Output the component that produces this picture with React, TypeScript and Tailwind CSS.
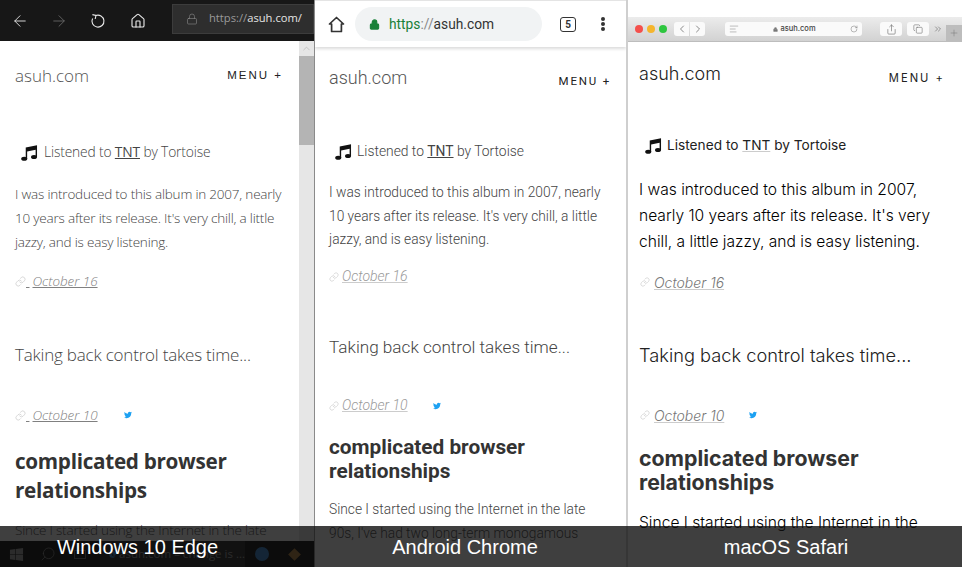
import React from 'react';
import { ArrowLeft, ArrowRight, Home, Lock, Link, Search, Plus, ChevronLeft, ChevronRight, ChevronUp, Share, Copy, ChevronsRight, RotateCw, AlignLeft } from 'lucide-react';
import { FaTwitter, FaWindows, FaEdge } from 'react-icons/fa';

const MusicNote = ({ className }: { className: string }) => (
  <svg viewBox="0 0 18 17" className={className} fill="currentColor">
    <path d="M5 2.6 17 0.2V13h-1.5V5L6.5 6.8V15H5Z" />
    <ellipse cx="3.4" cy="14.6" rx="3.2" ry="2.2" />
    <ellipse cx="13.8" cy="12.8" rx="3.2" ry="2.2" />
  </svg>
);

const EdgeRefresh = () => (
  <svg viewBox="0 0 16 16" className="w-[16px] h-[16px] mr-[24px]" fill="none" stroke="currentColor" strokeWidth="1.1">
    <path d="M5.6 2.6A6 6 0 1 1 2.6 5.4" />
    <path d="M2.4 1.6 6 2.4 5.2 6" />
  </svg>
);

const ChromeHome = () => (
  <svg viewBox="0 0 17 17" className="w-[17px] h-[17px] mr-[10px] text-[#333]" fill="none" stroke="currentColor" strokeWidth="1.7" strokeLinejoin="round">
    <path d="M8.5 1.5 15.5 8H13.4V15.5H3.6V8H1.5Z" />
  </svg>
);

const EdgeColumn = () => (
  <div className="flex flex-col w-[315px] h-[567px] shrink-0 border-r border-[#8a8a8a] overflow-hidden bg-white font-['Open_Sans',sans-serif] font-light text-[#444]">
    <div className="flex items-center h-[41px] shrink-0 bg-[#171717] pl-[11px] text-[#e8e8e8]">
      <ArrowLeft className="w-[18px] h-[18px] mr-[21px]" strokeWidth={1.2} />
      <ArrowRight className="w-[18px] h-[18px] mr-[22px] text-[#666]" strokeWidth={1.2} />
      <EdgeRefresh />
      <Home className="w-[16px] h-[16px] mr-[26px]" strokeWidth={1.7} />
      <div className="flex items-center flex-1 h-[30px] mb-[4px] bg-[#2e2e2e] border border-[#3c3c3c] pl-[13px] text-[11.2px] font-normal whitespace-nowrap">
        <Lock className="w-[12px] h-[12px] mr-[11px] text-[#8b8b8b]" strokeWidth={1.2} />
        <span className="text-[#9a9a9a]">https://</span>
        <span className="text-[#e4e4e4]">asuh.com/</span>
      </div>
    </div>
    <div className="flex flex-1 min-h-0">
      <div className="flex-1 min-w-0 pl-[15px] pr-[16px] overflow-hidden">
        <div className="flex items-center justify-between h-[70px]">
          <span className="text-[17px] text-[#555]">asuh.com</span>
          <span className="font-['Liberation_Sans',sans-serif] font-normal text-[11.5px] tracking-[2px] text-[#222] whitespace-nowrap">MENU +</span>
        </div>
        <div className="flex items-center h-[24px] mt-[29px] pl-[6px] text-[13.8px] tracking-[-0.15px] whitespace-nowrap">
          <MusicNote className="w-[17px] h-[16px] mr-[6px] mt-[2px] text-[#111]" />
          <span>Listened to <span className="underline font-normal">TNT</span> by Tortoise</span>
        </div>
        <p className="mt-[18px] text-[13.5px] tracking-[-0.2px] leading-[24px] w-[275px]">I was introduced to this album in 2007, nearly 10 years after its release. It's very chill, a little jazzy, and is easy listening.</p>
        <div className="flex items-center h-[24px] mt-[15px] text-[13.4px] italic text-[#808080]">
          <Link className="w-[11px] h-[11px] text-[#bbb]" strokeWidth={1.2} />
          <span className="underline whitespace-pre"> </span>
          <span className="underline ml-[3px]">October 16</span>
        </div>
        <div className="h-[28px] mt-[48px] text-[17px] tracking-[-0.2px] leading-[28px] whitespace-nowrap">Taking back control takes time...</div>
        <div className="flex items-center h-[24px] mt-[34px] text-[13.4px] italic text-[#808080]">
          <Link className="w-[11px] h-[11px] text-[#bbb]" strokeWidth={1.2} />
          <span className="underline whitespace-pre"> </span>
          <span className="underline ml-[3px]">October 10</span>
          <FaTwitter className="w-[8px] h-[8px] ml-[26px] text-[#1da1f2]" />
        </div>
        <h2 className="mt-[20px] text-[20.7px] tracking-[-0.3px] leading-[29px] font-bold text-[#333]">complicated browser relationships</h2>
        <p className="mt-[13px] text-[13.5px] tracking-[-0.2px] leading-[24px] whitespace-nowrap">Since I started using the Internet in the late</p>
      </div>
      <div className="flex flex-col w-[15px] shrink-0 bg-[#e6e6e6]">
        <div className="flex items-center justify-center h-[15px] text-[#999]">
          <ChevronUp className="w-[11px] h-[11px]" strokeWidth={1} />
        </div>
        <div className="h-[89px] bg-[#b4b4b4]" />
      </div>
    </div>
    <div className="flex items-center h-[26px] shrink-0 bg-black text-[#999]">
      <FaWindows className="w-[15px] h-[15px] ml-[9px]" />
      <Search className="w-[16px] h-[16px] ml-[16px] -scale-x-100" strokeWidth={1} />
      <div className="w-[12px] h-[9px] ml-[18px] border border-[#666]" />
      <div className="flex items-center w-[145px] h-full ml-[14px] bg-[#1c1c1c] pl-[9px] text-[11.5px] font-normal text-[#999] whitespace-nowrap">
        <FaEdge className="w-[11px] h-[11px] mr-[3px] text-[#2a7fd0]" />
        asuh.com – change is ...
      </div>
      <div className="w-[14px] h-[14px] ml-[10px] rounded-full bg-[#2a7fd0]" />
      <div className="w-[9px] h-[9px] ml-[21px] rotate-45 bg-[#b07a30]" />
    </div>
  </div>
);

const ChromeColumn = () => (
  <div className="flex flex-col w-[312px] h-[567px] shrink-0 border-r border-[#cfcfcf] overflow-hidden bg-white font-['Roboto',sans-serif] font-light text-[#444]">
    <div className="flex items-center h-[47px] shrink-0 border-t border-[#e4e4e4] shadow-[0_2px_3px_rgba(0,0,0,0.14)] pl-[13px] relative">
      <ChromeHome />
      <div className="flex items-center w-[187px] h-[34px] rounded-full bg-[#f1f3f4] pl-[14px] text-[13.75px] font-normal whitespace-nowrap">
        <Lock className="w-[11px] h-[11px] mr-[9px] text-[#188038]" fill="currentColor" strokeWidth={2.4} />
        <span className="text-[#188038]">https</span>
        <span className="text-[#888]">://</span>
        <span className="text-[#333]">asuh.com</span>
      </div>
      <div className="flex items-center justify-center w-[16px] h-[15px] ml-[18px] border-[1.5px] border-[#333] rounded-[3px] text-[10px] font-bold text-[#333]">5</div>
      <div className="flex flex-col gap-[1px] ml-[25px]">
        <span className="w-[4px] h-[4px] rounded-full bg-[#333]" />
        <span className="w-[4px] h-[4px] rounded-full bg-[#333]" />
        <span className="w-[4px] h-[4px] rounded-full bg-[#333]" />
      </div>
    </div>
    <div className="flex-1 min-h-0 pl-[14px] pr-[15px] overflow-hidden">
      <div className="flex justify-between h-[62px]">
        <span className="text-[18px] leading-[62px] text-[#555]">asuh.com</span>
        <span className="mt-[24px] text-[11.5px] font-normal leading-[20px] tracking-[1.8px] text-[#222] whitespace-nowrap">MENU +</span>
      </div>
      <div className="flex items-center h-[24px] mt-[30px] pl-[6px] text-[13.85px] whitespace-nowrap">
        <MusicNote className="w-[17px] h-[16px] mr-[5px] mt-[2px] text-[#111]" />
        <span>Listened to <span className="underline font-normal">TNT</span> by Tortoise</span>
      </div>
      <p className="mt-[18px] text-[13.75px] leading-[23.5px]">I was introduced to this album in 2007, nearly 10 years after its release. It's very chill, a little jazzy, and is easy listening.</p>
      <div className="flex items-center h-[24px] mt-[13px] text-[14px] italic text-[#999]">
        <Link className="w-[10px] h-[10px] mr-[3px] text-[#bbb]" strokeWidth={1.2} />
        <span className="underline decoration-[#ccc]">October 16</span>
      </div>
      <div className="h-[28px] mt-[44px] text-[17.15px] leading-[28px] whitespace-nowrap">Taking back control takes time...</div>
      <div className="flex items-center h-[24px] mt-[33px] text-[14px] italic text-[#999]">
        <Link className="w-[10px] h-[10px] mr-[3px] text-[#bbb]" strokeWidth={1.2} />
        <span className="underline decoration-[#ccc]">October 10</span>
        <FaTwitter className="w-[8px] h-[8px] ml-[25px] text-[#1da1f2]" />
      </div>
      <h2 className="mt-[17px] text-[20.8px] leading-[24px] font-bold text-[#333]">complicated browser relationships</h2>
      <p className="mt-[14px] text-[13.75px] leading-[24px] w-[270px]">Since I started using the Internet in the late 90s, I've had two long-term monogamous</p>
    </div>
  </div>
);

const SafariColumn = () => (
  <div className="flex flex-col flex-1 min-w-0 h-[567px] border-l border-[#cfcfcf] overflow-hidden bg-white font-['Inter',sans-serif] text-[#222] pt-[17px]">
    <div className="flex items-center h-[25px] shrink-0 bg-gradient-to-b from-[#ececec] to-[#d2d2d2] border-b border-[#bdbdbd] pl-[7px] relative">
      <span className="w-[8px] h-[8px] rounded-full bg-[#f4504c]" />
      <span className="w-[8px] h-[8px] ml-[4px] rounded-full bg-[#f5b52d]" />
      <span className="w-[8px] h-[8px] ml-[4px] rounded-full bg-[#2ec63f]" />
      <div className="flex ml-[7px] gap-px">
        <div className="flex items-center justify-center w-[15px] h-[14px] rounded-l-[3px] bg-[#fafafa]">
          <ChevronLeft className="w-[12px] h-[12px] text-[#666]" strokeWidth={1.5} />
        </div>
        <div className="flex items-center justify-center w-[15px] h-[14px] rounded-r-[3px] bg-[#fafafa]">
          <ChevronRight className="w-[12px] h-[12px] text-[#666]" strokeWidth={1.5} />
        </div>
      </div>
      <div className="flex items-center justify-between w-[137px] h-[14px] ml-[20px] rounded-[3px] bg-[#fafafa] px-[4px] text-[7.5px] font-medium text-[#444]">
        <AlignLeft className="w-[10px] h-[10px] text-[#999]" strokeWidth={1.5} />
        <span className="flex items-center gap-[2px]">
          <Lock className="w-[5px] h-[5px] text-[#777]" fill="currentColor" />
          asuh.com
        </span>
        <RotateCw className="w-[8px] h-[8px] text-[#777]" strokeWidth={1.5} />
      </div>
      <div className="flex items-center justify-center w-[22px] h-[14px] ml-[18px] rounded-[3px] bg-[#fafafa]">
        <Share className="w-[11px] h-[11px] text-[#777]" strokeWidth={1.5} />
      </div>
      <div className="flex items-center justify-center w-[22px] h-[14px] ml-[5px] rounded-[3px] bg-[#fafafa]">
        <Copy className="w-[10px] h-[10px] text-[#777]" strokeWidth={1.5} />
      </div>
      <ChevronsRight className="w-[10px] h-[10px] ml-[4px] text-[#666]" strokeWidth={1.5} />
      <div className="absolute right-0 bottom-0 flex items-center justify-center w-[16px] h-[16px] bg-[#bdbdbd]">
        <Plus className="w-[10px] h-[10px] text-[#777]" strokeWidth={1.2} />
      </div>
    </div>
    <div className="flex-1 min-h-0 pl-[11px] pr-[17px] overflow-hidden">
      <div className="flex justify-between h-[62px]">
        <span className="text-[18px] font-light leading-[64px]">asuh.com</span>
        <span className="mt-[26px] text-[11.2px] leading-[20px] tracking-[2px] whitespace-nowrap">MENU +</span>
      </div>
      <div className="flex items-center h-[24px] mt-[29px] pl-[6px] text-[13.7px] whitespace-nowrap">
        <MusicNote className="w-[17px] h-[16px] mr-[5px] mt-[2px] text-[#111]" />
        <span>Listened to <span className="underline decoration-[#ccc]">TNT</span> by Tortoise</span>
      </div>
      <p className="mt-[20px] text-[15.6px] leading-[26px] font-light text-black">I was introduced to this album in 2007, nearly 10 years after its release. It's very chill, a little jazzy, and is easy listening.</p>
      <div className="flex items-center h-[24px] mt-[15px] text-[14px] italic font-light text-[#777]">
        <Link className="w-[10px] h-[10px] mr-[4px] ml-px text-[#bbb]" strokeWidth={1.2} />
        <span className="underline decoration-[#ccc]">October 16</span>
      </div>
      <div className="h-[28px] mt-[47px] text-[18.25px] leading-[28px] font-light whitespace-nowrap">Taking back control takes time...</div>
      <div className="flex items-center h-[24px] mt-[34px] text-[14px] italic font-light text-[#777]">
        <Link className="w-[10px] h-[10px] mr-[4px] ml-px text-[#bbb]" strokeWidth={1.2} />
        <span className="underline decoration-[#ccc]">October 10</span>
        <FaTwitter className="w-[8px] h-[8px] ml-[25px] text-[#1da1f2]" />
      </div>
      <h2 className="mt-[19px] text-[21.3px] leading-[24px] font-bold text-[#333]">complicated browser relationships</h2>
      <p className="mt-[16px] text-[15.6px] leading-[26px] font-light text-black whitespace-nowrap">Since I started using the Internet in the</p>
    </div>
  </div>
);

export default function App() {
  return (
    <div className="relative flex w-[962px] h-[567px] overflow-hidden bg-white">
      <EdgeColumn />
      <ChromeColumn />
      <SafariColumn />
      {/* caption strip over all three screenshots */}
      <div className="absolute left-0 right-0 bottom-0 flex items-center h-[41px] bg-[#0f0f0f]/80 font-['Liberation_Sans',sans-serif] text-[20px] text-white">
        <div className="w-[315px] pr-[40px] text-center">Windows 10 Edge</div>
        <div className="w-[312px] pr-[12px] text-center">Android Chrome</div>
        <div className="flex-1 pr-[17px] text-center">macOS Safari</div>
      </div>
    </div>
  );
}
